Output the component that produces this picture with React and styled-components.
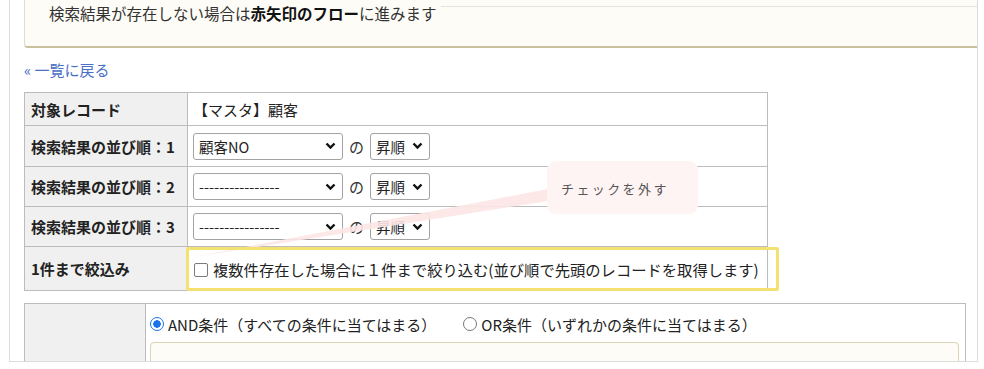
import styled, { createGlobalStyle } from "styled-components"

const GlobalStyle = createGlobalStyle`
    body {
        margin: 0;
        background: #fff;
        font-family: "Noto Sans CJK JP", "Noto Sans", sans-serif;
        color: #333;
    }
`

const Chevron = () => (
    <svg width="11" height="8" viewBox="0 0 11 8">
        <path d="M1.5 1.5 L5.5 5.5 L9.5 1.5" fill="none" stroke="#111" strokeWidth="2.4" />
    </svg>
)

const SortRow = ({ label, value }) => (
    <tr>
        <LabelCell>{label}</LabelCell>
        <Cell>
            <Inline>
                <FakeSelect $w={150}><span>{value}</span><Chevron /></FakeSelect>
                <No>の</No>
                <FakeSelect $w={60}><span>昇順</span><Chevron /></FakeSelect>
            </Inline>
        </Cell>
    </tr>
)

const App = () => {
    return (
        <>
            <GlobalStyle />
            <Frame>
                <Notice>
                    検索結果が存在しない場合は<b>赤矢印のフロー</b>に進みます
                </Notice>
                <BackLink href="#">« 一覧に戻る</BackLink>
                <SettingTable>
                    <tbody>
                        <tr style={{ height: 33 }}>
                            <LabelCell>対象レコード</LabelCell>
                            <Cell>【マスタ】顧客</Cell>
                        </tr>
                        <SortRow label="検索結果の並び順：1" value="顧客NO" />
                        <SortRow label="検索結果の並び順：2" value="----------------" />
                        <SortRow label="検索結果の並び順：3" value="----------------" />
                        <tr style={{ height: 44 }}>
                            <LabelCell>1件まで絞込み</LabelCell>
                            <Cell>
                                <Inline>
                                    <Check />
                                    <CheckText>複数件存在した場合に１件まで絞り込む(並び順で先頭のレコードを取得します)</CheckText>
                                </Inline>
                            </Cell>
                        </tr>
                    </tbody>
                </SettingTable>
                <CondTable>
                    <tbody>
                        <tr>
                            <CondLabel />
                            <CondCell>
                                <RadioRow>
                                    <Radio $on />
                                    <RadioText>AND条件（すべての条件に当てはまる）</RadioText>
                                    <Radio />
                                    <RadioText>OR条件（いずれかの条件に当てはまる）</RadioText>
                                </RadioRow>
                                <CondBox />
                            </CondCell>
                        </tr>
                    </tbody>
                </CondTable>

                <Pointer width="560" height="270" viewBox="0 0 560 270">
                    <polygon points="183,257 538,189 538,201" fill="#fde6e6" opacity="0.9" />
                </Pointer>
                <Bubble>チェックを外す</Bubble>
                <Highlight />
            </Frame>
        </>
    )
}

export default App

const Frame = styled.div`
    position: relative;
    margin-left: 9px;
    width: 969px;
    height: 362px;
    box-sizing: border-box;
    border: 1px solid #dcdcdc;
    border-top: none;
    padding-left: 14px;
    overflow: hidden;
`

const Notice = styled.div`
    position: relative;
    margin-top: -12px;
    height: 60px;
    box-sizing: border-box;
    background: #fdfcf6;
    border: 1px solid #e2ddc8;
    border-bottom: 2px solid #c9c19e;
    border-right: none;
    border-bottom-left-radius: 4px;
    padding: 15px 0 0 24px;
    font-size: 15.5px;
    line-height: 19px;
    color: #333;
    b { color: #111; }
    &::after {
        content: "";
        position: absolute;
        left: 416px;
        right: 0;
        top: 17px;
        border-top: 1px solid #e4e4e4;
    }
`

const BackLink = styled.a`
    display: block;
    width: fit-content;
    margin-top: 14px;
    font-size: 15px;
    line-height: 16px;
    color: #4a6fc6;
    text-decoration: none;
`

const SettingTable = styled.table`
    margin-top: 14px;
    width: 744px;
    border-collapse: collapse;
    font-size: 15px;
    tr { height: 40px; }
    tr:nth-child(2) { height: 41px; }
`

const LabelCell = styled.td`
    width: 150px;
    background: #f0f0f0;
    border: 1px solid #bcbcbc;
    padding: 0 6px;
    font-weight: bold;
    color: #222;
    white-space: nowrap;
`

const Cell = styled.td`
    border: 1px solid #bcbcbc;
    padding: 0 5px;
    color: #222;
`

const Inline = styled.div`
    display: flex;
    align-items: center;
`

const FakeSelect = styled.div`
    width: ${p => p.$w}px;
    height: 27px;
    box-sizing: border-box;
    border: 1px solid #a3a3a3;
    border-radius: 3px;
    background: #fff;
    display: flex;
    align-items: center;
    justify-content: space-between;
    padding: 0 6px 0 5px;
    font-size: 14.5px;
    color: #222;
`

const No = styled.span`
    margin: 0 6px;
    color: #333;
`

const Check = styled.span`
    width: 12px;
    height: 12px;
    margin: 2px 5px 0 1px;
    border: 1px solid #7a7a7a;
    border-radius: 2px;
    background: #fff;
    flex-shrink: 0;
`

const CheckText = styled.span`
    font-size: 15.3px;
    color: #222;
    white-space: nowrap;
`

const CondTable = styled.table`
    margin-top: 12px;
    width: 942px;
    border-collapse: collapse;
    font-size: 15px;
`

const CondLabel = styled.td`
    width: 118px;
    height: 80px;
    background: #f0f0f0;
    border: 1px solid #bcbcbc;
`

const CondCell = styled.td`
    border: 1px solid #bcbcbc;
    padding: 11px 6px 0 4px;
    vertical-align: top;
`

const RadioRow = styled.div`
    display: flex;
    align-items: center;
    height: 18px;
`

const Radio = styled.span`
    width: 14px;
    height: 14px;
    border-radius: 50%;
    box-sizing: border-box;
    border: 1px solid ${p => (p.$on ? "#1a73e8" : "#777")};
    background: ${p => (p.$on ? "radial-gradient(circle, #1a73e8 0 3.5px, #fff 4px)" : "#fff")};
    margin-right: 4px;
    flex-shrink: 0;
`

const RadioText = styled.span`
    color: #222;
    margin-right: 27px;
    white-space: nowrap;
`

const CondBox = styled.div`
    margin-top: 9px;
    height: 60px;
    border: 1px solid #dcd3b4;
    border-radius: 4px;
    background: #fdfcf6;
`

const Pointer = styled.svg`
    position: absolute;
    left: 0;
    top: 0;
    pointer-events: none;
`

const Bubble = styled.div`
    position: absolute;
    left: 537px;
    top: 161px;
    width: 151px;
    height: 53px;
    box-sizing: border-box;
    border-radius: 9px;
    background: #fff4f4;
    display: flex;
    align-items: center;
    padding: 2px 0 0 14px;
    font-size: 13px;
    letter-spacing: 2.4px;
    color: #555;
`

const Highlight = styled.div`
    position: absolute;
    left: 176px;
    top: 247px;
    width: 593px;
    height: 44px;
    box-sizing: border-box;
    border: 3px solid #f3e171;
    border-radius: 2px;
    pointer-events: none;
`
